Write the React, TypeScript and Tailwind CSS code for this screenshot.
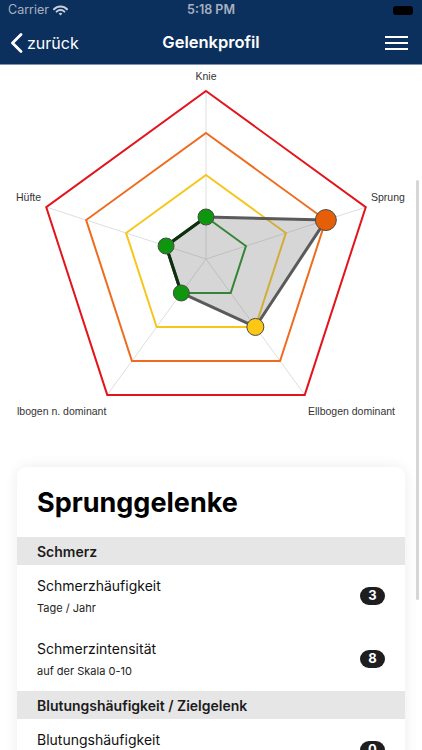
import type { ReactNode } from 'react'

type Axis = { label: string; value: number }

const AXES: Axis[] = [
  { label: 'Knie', value: 1 },
  { label: 'Sprung', value: 3 },
  { label: 'Ellbogen dominant', value: 2 },
  { label: 'Ellbogen n. dominant', value: 1 },
  { label: 'Hüfte', value: 1 },
]

const CX = 206
const CY = 194
const STEP = 42

const LEVELS = [
  { level: 4, color: '#e3141c' },
  { level: 3, color: '#ee6c1f' },
  { level: 2, color: '#f6c61c' },
  { level: 1, color: '#1b8a1b' },
]

const DOT: Record<number, { fill: string; r: number }> = {
  1: { fill: '#0f960f', r: 8 },
  2: { fill: '#fcc814', r: 8.5 },
  3: { fill: '#e65f07', r: 10.5 },
}

function pt(i: number, level: number): [number, number] {
  const a = ((-90 + 72 * i) * Math.PI) / 180
  return [CX + Math.cos(a) * STEP * level, CY + Math.sin(a) * STEP * level]
}

function ring(level: number) {
  return AXES.map((_, i) => pt(i, level).join(',')).join(' ')
}

function RadarChart() {
  const data = AXES.map((a, i) => pt(i, a.value))
  const font = { fontFamily: '"Liberation Sans", Arial, sans-serif' }

  return (
    <svg width="422" height="402" viewBox="0 0 422 402" className="block">
      {/* spokes */}
      {AXES.map((_, i) => {
        const [x, y] = pt(i, 4)
        return <line key={i} x1={CX} y1={CY} x2={x} y2={y} stroke="#dedede" strokeWidth="1" />
      })}

      {/* thresholds */}
      {LEVELS.map((l) => (
        <polygon key={l.level} points={ring(l.level)} fill="none" stroke={l.color} strokeWidth="2" />
      ))}

      {/* values */}
      <polygon
        points={data.map((p) => p.join(',')).join(' ')}
        fill="rgba(120,120,120,0.3)"
        stroke="#5a5a5a"
        strokeWidth="3"
        strokeLinejoin="round"
      />
      <polyline
        points={[data[3], data[4], data[0]].map((p) => p.join(',')).join(' ')}
        fill="none"
        stroke="#0b300b"
        strokeWidth="3"
        strokeLinejoin="round"
      />

      {data.map(([x, y], i) => {
        const d = DOT[AXES[i].value]
        return <circle key={i} cx={x} cy={y} r={d.r} fill={d.fill} stroke="#4a4a4a" strokeWidth="1" />
      })}

      {/* labels */}
      <g fontSize="10.5" fill="#333" style={font}>
        <text x="206" y="15" textAnchor="middle">Knie</text>
        <text x="16" y="136">Hüfte</text>
        <text x="371" y="136">Sprung</text>
        <text x="17" y="350">lbogen n. dominant</text>
        <text x="308" y="350">Ellbogen dominant</text>
      </g>
    </svg>
  )
}

function StatusBar() {
  return (
    <div className="relative flex h-[21px] items-center px-2 text-[12.5px] text-[#a7b1c0]">
      <span>Carrier</span>
      <svg width="15" height="11" viewBox="0 0 15 11" className="ml-[4px]">
        <path d="M1 4.2 A9 9 0 0 1 14 4.2" stroke="#c9d0da" strokeWidth="2" fill="none" strokeLinecap="round" />
        <path d="M3.6 6.6 A5.4 5.4 0 0 1 11.4 6.6" stroke="#c9d0da" strokeWidth="2" fill="none" strokeLinecap="round" />
        <path d="M5.6 8.6 L7.5 10.6 L9.4 8.6 A2.7 2.7 0 0 0 5.6 8.6 Z" fill="#c9d0da" />
      </svg>
      <span className="absolute left-0 right-0 text-center font-semibold">5:18 PM</span>
      <span className="ml-auto mr-[1px] h-[9px] w-[20px] rounded-[3px] bg-black" />
    </div>
  )
}

function NavBar() {
  return (
    <div className="relative flex h-[44px] items-center border-b border-[#7f94ae] text-white">
      <div className="flex items-center pl-[10px]">
        <svg width="13" height="20" viewBox="0 0 13 20">
          <path d="M11 1.5 L2.5 10 L11 18.5" stroke="white" strokeWidth="2.8" fill="none" strokeLinecap="round" strokeLinejoin="round" />
        </svg>
        <span className="ml-[4px] text-[16px]">zurück</span>
      </div>
      <span className="pointer-events-none absolute left-0 right-0 text-center text-[16.5px] font-semibold">
        Gelenkprofil
      </span>
      <div className="ml-auto mr-[14px] flex w-[23px] flex-col gap-[4px]">
        <span className="h-[2px] bg-white" />
        <span className="h-[2px] bg-white" />
        <span className="h-[2px] bg-white" />
      </div>
    </div>
  )
}

function SectionHeader({ children }: { children: ReactNode }) {
  return (
    <div className="flex h-[28px] items-center bg-[#e6e6e6] px-5 text-[14px] font-semibold text-[#1c1c1c]">
      {children}
    </div>
  )
}

function Row({ title, subtitle, value }: { title: string; subtitle: string; value: string }) {
  return (
    <div className="flex items-center justify-between px-5 pt-[11px] pb-[12px]">
      <div>
        <div className="text-[14px] leading-5 text-[#111]">{title}</div>
        <div className="mt-1 text-[11px] leading-4 text-[#222]">{subtitle}</div>
      </div>
      <span className="flex h-[18px] w-[25px] items-center justify-center rounded-full bg-[#1e1e20] text-[13px] font-bold text-white">
        {value}
      </span>
    </div>
  )
}

export default function App() {
  return (
    <div
      className="relative h-[750px] w-[422px] overflow-hidden bg-white"
      style={{ fontFamily: 'Inter, "Noto Sans", sans-serif' }}
    >
      <header className="bg-[#0c305d]">
        <StatusBar />
        <NavBar />
      </header>

      <RadarChart />

      <div className="mx-[17px] overflow-hidden rounded-t-[9px] bg-white shadow-[0_0_14px_rgba(0,0,0,0.08)]">
        <h1 className="px-5 pt-[19px] pb-[17px] text-[27px] font-bold leading-[34px] text-black">Sprunggelenke</h1>

        <SectionHeader>Schmerz</SectionHeader>
        <Row title="Schmerzhäufigkeit" subtitle="Tage / Jahr" value="3" />
        <Row title="Schmerzintensität" subtitle="auf der Skala 0-10" value="8" />

        <SectionHeader>Blutungshäufigkeit / Zielgelenk</SectionHeader>
        <Row title="Blutungshäufigkeit" subtitle="pro Jahr" value="0" />
      </div>

      {/* scroll indicator */}
      <span className="absolute right-[3px] top-[180px] h-[420px] w-[3px] rounded-full bg-[#d6d6d6]" />
    </div>
  )
}
